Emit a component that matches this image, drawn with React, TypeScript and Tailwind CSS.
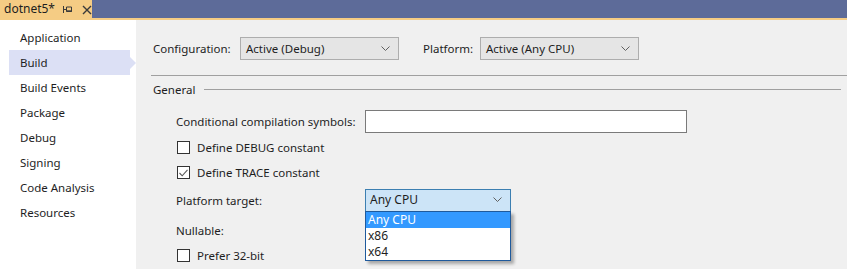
import React from 'react';

const font = { fontFamily: '"Noto Sans", "Open Sans", sans-serif' };

const navItems = [
  'Application',
  'Build',
  'Build Events',
  'Package',
  'Debug',
  'Signing',
  'Code Analysis',
  'Resources',
];

function Chevron() {
  return (
    <svg width="9" height="6" viewBox="0 0 9 6" className="shrink-0">
      <path d="M0.5 0.5 L4.5 4.5 L8.5 0.5" fill="none" stroke="#606060" strokeWidth="1" />
    </svg>
  );
}

function Select({ value, width }: { value: string; width: string }) {
  return (
    <div
      className={`${width} h-[23px] flex items-center justify-between pl-[5px] pr-[8px] bg-[#e5e5e5] border border-[#adadad] text-[#1e1e1e]`}
    >
      <span>{value}</span>
      <Chevron />
    </div>
  );
}

function Checkbox({ checked, label }: { checked?: boolean; label: string }) {
  return (
    <div className="flex items-center gap-[7px]">
      <div className="w-[13px] h-[13px] border border-[#333333] bg-white flex items-center justify-center">
        {checked && (
          <svg width="9" height="8" viewBox="0 0 9 8">
            <path d="M0.5 4 L3.2 6.8 L8.5 0.8" fill="none" stroke="#5a5a5a" strokeWidth="1.1" />
          </svg>
        )}
      </div>
      <span>{label}</span>
    </div>
  );
}

export default function App() {
  return (
    <div className="w-[847px] h-[269px] overflow-hidden flex flex-col bg-[#f0f0f0] text-[11.5px] text-[#1e1e1e]" style={font}>
      {/* document tab strip */}
      <div className="h-[18px] flex bg-[#5d6b99]">
        <div className="w-[92px] shrink-0 bg-[#f5cc84] flex items-center pl-[4px]">
          <span className="w-[54px] text-[12px] leading-none text-[#1e1e1e]">dotnet5*</span>
          <svg width="10" height="9" viewBox="0 0 10 9" className="shrink-0 ml-[5px] mt-[1px]">
            <path d="M0.5 1 V8 M0.5 4.5 H3.5" stroke="#3a3a3a" strokeWidth="1" fill="none" />
            <path d="M3.5 2 H8.5 V6.5 H3.5 Z" stroke="#3a3a3a" strokeWidth="1" fill="none" />
            <path d="M3.5 6 H9" stroke="#3a3a3a" strokeWidth="1.4" />
          </svg>
          <svg width="10" height="10" viewBox="0 0 10 10" className="shrink-0 ml-[9px] mt-[1px]">
            <path d="M1 1 L9 9 M9 1 L1 9" stroke="#3a3a3a" strokeWidth="1.4" fill="none" />
          </svg>
        </div>
      </div>
      <div className="h-[2px] bg-[#f5cc84]" />

      <div className="flex flex-1">
        {/* left nav */}
        <div className="w-[136px] bg-white pt-[5px] relative">
          {navItems.map((item) => {
            const active = item === 'Build';
            return (
              <div key={item} className="h-[25px] relative flex items-center pl-[20px] pt-px">
                {active && (
                  <>
                    <div className="absolute left-[9px] right-[6px] top-0 bottom-0 bg-[#dce0f5]" />
                    <div className="absolute right-0 top-[7px] w-0 h-0 border-y-[6px] border-y-transparent border-l-[6px] border-l-[#dce0f5]" />
                  </>
                )}
                <span className="relative">{item}</span>
              </div>
            );
          })}
        </div>

        {/* main page */}
        <div className="flex-1 pl-[15px] pt-[17px]">
          <div className="flex items-center pl-[2px]">
            <span className="w-[87px]">Configuration:</span>
            <Select value="Active (Debug)" width="w-[159px]" />
            <span className="ml-[24px] w-[57px]">Platform:</span>
            <Select value="Active (Any CPU)" width="w-[159px]" />
          </div>

          <div className="mt-[15px] h-px bg-[#a0a0a0]" />

          <div className="mt-[5px] flex items-center pl-[2px] pr-[6px]">
            <span>General</span>
            <div className="ml-[9px] flex-1 h-px bg-[#a0a0a0]" />
          </div>

          <div className="pl-[25px] mt-[12px]">
            <div className="flex items-center">
              <span className="w-[189px]">Conditional compilation symbols:</span>
              <div className="w-[322px] h-[23px] bg-white border border-[#7a7a7a]" />
            </div>

            <div className="h-[25px] mt-[2px] flex items-center pl-px">
              <Checkbox label="Define DEBUG constant" />
            </div>
            <div className="h-[25px] flex items-center pl-px">
              <Checkbox checked label="Define TRACE constant" />
            </div>

            <div className="h-[30px] flex items-center">
              <span className="w-[189px]">Platform target:</span>
              <div className="relative">
                <div className="w-[146px] h-[23px] flex items-center justify-between pl-[4px] pr-[8px] bg-[#cce4f7] border border-[#3c7fb1] text-[12px]">
                  <span>Any CPU</span>
                  <Chevron />
                </div>
                <div className="absolute left-0 top-[22px] w-[146px] bg-white border border-[#1f5a9c] shadow-[3px_3px_3px_rgba(0,0,0,0.3)] text-[12px] leading-[16px] z-10">
                  <div className="h-[16px] pl-[2px] bg-[#3399ff] text-white">Any CPU</div>
                  <div className="h-[16px] pl-[2px]">x86</div>
                  <div className="h-[16px] pl-[2px]">x64</div>
                </div>
              </div>
            </div>

            <div className="h-[30px] flex items-center">
              <span>Nullable:</span>
            </div>
            <div className="h-[20px] flex items-center pl-px">
              <Checkbox label="Prefer 32-bit" />
            </div>
          </div>
        </div>
      </div>
    </div>
  );
}
